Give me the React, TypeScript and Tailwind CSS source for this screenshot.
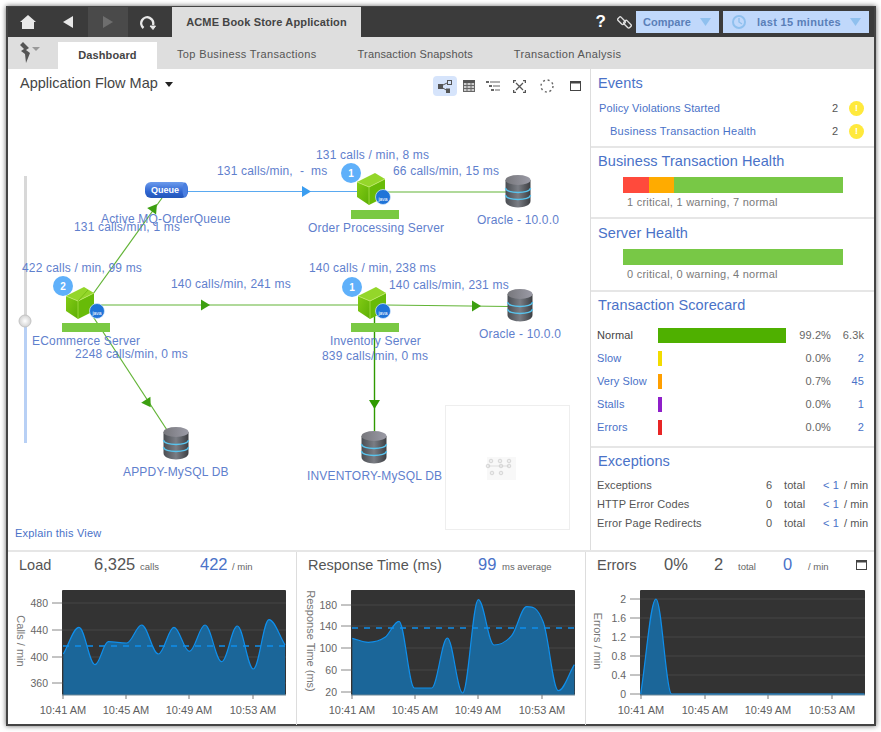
import type { ReactNode } from 'react'

type Pt = [number, number]

// monotone curve: flat at local peaks and dips, sloped everywhere else
function curve(pts: Pt[]) {
  const n = pts.length
  const slope = pts.map(([x, y], i) => {
    if (i === 0) return (pts[1][1] - y) / (pts[1][0] - x)
    if (i === n - 1) return (y - pts[i - 1][1]) / (x - pts[i - 1][0])
    const a = y - pts[i - 1][1]
    const b = pts[i + 1][1] - y
    if (a * b <= 0) return 0
    return (pts[i + 1][1] - pts[i - 1][1]) / (pts[i + 1][0] - pts[i - 1][0])
  })
  let d = `M${pts[0][0]} ${pts[0][1]}`
  for (let i = 1; i < n; i++) {
    const [x0, y0] = pts[i - 1]
    const [x1, y1] = pts[i]
    const h = (x1 - x0) * 0.36
    d += ` C${x0 + h} ${y0 + slope[i - 1] * h} ${x1 - h} ${y1 - slope[i] * h} ${x1} ${y1}`
  }
  return d
}

const fromZoom = (ox: number, list: Pt[]): Pt[] => list.map(([x, y]) => [ox + x / 3, 545 + y / 3])

const LOAD = fromZoom(0, [
  [190, 330], [237, 250], [285, 362], [325, 293], [380, 297], [425, 243], [475, 330], [522, 250],
  [568, 322], [615, 243], [665, 353], [712, 246], [760, 375], [807, 227], [855, 303],
])
const RESPONSE = fromZoom(295, [
  [172, 283], [220, 295], [270, 280], [312, 232], [358, 432], [410, 432], [457, 282], [503, 447],
  [550, 167], [597, 303], [650, 275], [695, 188], [745, 235], [790, 440], [838, 362],
])
const ERRORS = fromZoom(585, [[167, 450], [213, 165], [260, 450], [838, 450]])

type ChartProps = {
  left: number
  width: number
  plot: [number, number]
  yTicks: [string, number][]
  xTicks: number[]
  pts: Pt[]
  dash?: number
  axis: string
  axisX: number
}

function Chart({ left, width, plot, yTicks, xTicks, pts, dash, axis, axisX }: ChartProps) {
  const [x0, x1] = plot
  const first = pts[0]
  const last = pts[pts.length - 1]
  const line = curve(pts)
  return (
    <svg width={width} height={140} viewBox={`${left} 585 ${width} 140`} className="block">
      <rect x={x0} y={591} width={x1 - x0} height={105} rx={1} fill="#333333" />
      {yTicks.map(([label, y]) => (
        <g key={label}>
          <line x1={x0} x2={x1} y1={y} y2={y} stroke="#474747" />
          <line x1={x0 - 10} x2={x0} y1={y} y2={y} stroke="#888888" />
          <text x={x0 - 14} y={y} textAnchor="end" dominantBaseline="central" className="fill-[#666666] text-[10.5px]">
            {label}
          </text>
        </g>
      ))}
      <path d={`${line} L${last[0]} 696 L${first[0]} 696 Z`} fill="#1b6699" />
      <path d={line} fill="none" stroke="#0f8fec" strokeWidth={1.2} />
      {dash && <line x1={x0 + 1} x2={x1} y1={dash} y2={dash} stroke="#0f8fec" strokeWidth={1.5} strokeDasharray="6 6" />}
      <line x1={x0} x2={x1} y1={696} y2={696} stroke="#6f8796" />
      {xTicks.map((x, i) => (
        <g key={x}>
          <line x1={x} x2={x} y1={696} y2={700} stroke="#777777" />
          <text x={x} y={711} textAnchor="middle" dominantBaseline="central" className="fill-[#5f5f5f] text-[11px]">
            {['10:41 AM', '10:45 AM', '10:49 AM', '10:53 AM'][i]}
          </text>
        </g>
      ))}
      <text
        x={axisX}
        y={642}
        textAnchor="middle"
        dominantBaseline="central"
        transform={`rotate(90 ${axisX} 642)`}
        className="fill-[#777777] text-[11px]"
      >
        {axis}
      </text>
    </svg>
  )
}

function MapText({ x, y, children }: { x: number; y: number; children: ReactNode }) {
  return (
    <text x={x} y={y} dominantBaseline="central" className="fill-[#5f80cd] text-[12px] tracking-[0.18px]">
      {children}
    </text>
  )
}

function Arrow({ x, y, angle, color }: { x: number; y: number; angle: number; color: string }) {
  return <polygon points="-4,-5.5 5,0 -4,5.5" fill={color} transform={`translate(${x} ${y}) rotate(${angle})`} />
}

function Database({ x, y }: { x: number; y: number }) {
  return (
    <g transform={`translate(${x} ${y})`}>
      <path d="M-12.5 4 V25 C-12.5 33.5 12.5 33.5 12.5 25 V4 Z" fill="url(#dbSide)" />
      <ellipse cx={0} cy={4} rx={12.5} ry={5} fill="url(#dbTop)" />
      <path d="M-12.5 12 C-12.5 18 12.5 18 12.5 12" fill="none" stroke="#58c4ee" strokeWidth={1.4} />
      <path d="M-12.5 19 C-12.5 25 12.5 25 12.5 19" fill="none" stroke="#58c4ee" strokeWidth={1.4} />
    </g>
  )
}

function Cube({ x, y, split }: { x: number; y: number; split?: boolean }) {
  return (
    <g transform={`translate(${x} ${y})`}>
      <polygon points="-14,-8 -2,-3 -2,15 -14,7" fill="url(#cubeLeft)" />
      <polygon points="-2,-3 14,-11 14,7 -2,15" fill="#68bb08" />
      <polygon points="-14,-8 4,-17 14,-11 -2,-3" fill="#94d62a" />
      <polyline points="-14,-8 -2,-3 14,-11" fill="none" stroke="#bfe86a" strokeWidth={0.8} />
      <line x1={-2} y1={-3} x2={-2} y2={15} stroke="#a6de4a" strokeWidth={0.8} />
      {split && <line x1={-2} y1={-3} x2={8} y2={-14} stroke="#6cb810" strokeWidth={0.8} />}
    </g>
  )
}

function JavaBadge({ x, y }: { x: number; y: number }) {
  return (
    <g>
      <circle cx={x} cy={y} r={7.5} fill="#1f74d8" stroke="#dcecff" strokeWidth={0.7} />
      <text x={x} y={y + 2} textAnchor="middle" dominantBaseline="central" className="fill-white text-[5px]">
        java
      </text>
    </g>
  )
}

function Bubble({ x, y, n }: { x: number; y: number; n: number }) {
  return (
    <g>
      <circle cx={x} cy={y} r={10} fill="#5fb0fa" />
      <text x={x} y={y} textAnchor="middle" dominantBaseline="central" className="fill-white text-[10px] font-bold">
        {n}
      </text>
    </g>
  )
}

function FlowMap() {
  const green = '#62b436'
  return (
    <svg width={582} height={447} viewBox="8 103 582 447" className="block">
      <defs>
        <linearGradient id="dbSide" x1="0" x2="1" y1="0" y2="0">
          <stop offset="0" stopColor="#4a4d52" />
          <stop offset="0.5" stopColor="#7a7d84" />
          <stop offset="1" stopColor="#3c3e42" />
        </linearGradient>
        <linearGradient id="dbTop" x1="0" x2="1" y1="0" y2="0">
          <stop offset="0" stopColor="#77777c" />
          <stop offset="1" stopColor="#9b9ba6" />
        </linearGradient>
        <linearGradient id="cubeLeft" x1="0" x2="1" y1="0" y2="1">
          <stop offset="0" stopColor="#84cc14" />
          <stop offset="1" stopColor="#5cae06" />
        </linearGradient>
        <linearGradient id="queue" x1="0" x2="0" y1="0" y2="1">
          <stop offset="0" stopColor="#6d9bec" />
          <stop offset="0.6" stopColor="#2f66d2" />
          <stop offset="1" stopColor="#2456b8" />
        </linearGradient>
        <radialGradient id="knob">
          <stop offset="0" stopColor="#ffffff" />
          <stop offset="1" stopColor="#d2d2d2" />
        </radialGradient>
      </defs>

      {/* zoom slider */}
      <rect x={24} y={176} width={3} height={145} fill="#d8d8d8" />
      <rect x={24} y={321} width={3} height={122} fill="#b8d0f5" />

      {/* edges */}
      <line x1={188} y1={191.5} x2={360} y2={191.5} stroke="#5aa9f0" strokeWidth={1.2} />
      <line x1={93} y1={294} x2={162} y2={198} stroke={green} strokeWidth={1.2} />
      <line x1={100} y1={305} x2={362} y2={305} stroke={green} strokeWidth={1.2} />
      <line x1={92} y1={315} x2={167} y2={430} stroke={green} strokeWidth={1.2} />
      <line x1={385} y1={192} x2={508} y2={192} stroke={green} strokeWidth={1.2} />
      <line x1={385} y1={305} x2={510} y2={306.5} stroke={green} strokeWidth={1.2} />
      <line x1={374.5} y1={315} x2={374.5} y2={434} stroke="#2f9a00" strokeWidth={1.4} />
      <Arrow x={306} y={191.5} angle={0} color="#3b9df0" />
      <Arrow x={154} y={208} angle={-54} color="#3c9f10" />
      <Arrow x={205} y={305} angle={0} color="#3c9f10" />
      <Arrow x={148} y={403} angle={57} color="#3c9f10" />
      <Arrow x={476} y={306} angle={0} color="#3c9f10" />
      <Arrow x={374.5} y={404} angle={90} color="#2f9a00" />

      {/* queue */}
      <rect x={145} y={182} width={43} height={16} rx={6} fill="url(#queue)" />
      <ellipse cx={185} cy={190} rx={2.5} ry={7.5} fill="#4a7fe0" />
      <text x={165} y={190} textAnchor="middle" dominantBaseline="central" className="fill-white text-[9px] font-bold">
        Queue
      </text>

      {/* nodes */}
      <Cube x={371} y={190} />
      <JavaBadge x={383} y={197} />
      <Bubble x={351} y={173} n={1} />
      <rect x={351} y={210} width={48} height={9} fill="#7ac943" />

      <Cube x={372} y={304} />
      <JavaBadge x={383} y={311} />
      <Bubble x={352} y={287} n={1} />
      <rect x={351} y={323} width={48} height={9} fill="#7ac943" />

      <Cube x={80} y={304} split />
      <JavaBadge x={97} y={311} />
      <Bubble x={63} y={286} n={2} />
      <rect x={62} y={323} width={48} height={9} fill="#7ac943" />

      <Database x={518} y={176} />
      <Database x={520} y={290} />
      <Database x={176} y={428} />
      <Database x={374} y={432} />

      {/* labels */}
      <MapText x={316} y={155}>131 calls / min, 8 ms</MapText>
      <MapText x={217} y={171}>131 calls/min,&#160; -&#160; ms</MapText>
      <MapText x={393} y={171}>66 calls/min, 15 ms</MapText>
      <MapText x={101} y={219}>Active MQ-OrderQueue</MapText>
      <MapText x={74} y={227}>131 calls/min, 1 ms</MapText>
      <MapText x={22} y={268}>422 calls / min, 99 ms</MapText>
      <MapText x={171} y={284}>140 calls/min, 241 ms</MapText>
      <MapText x={32} y={341}>ECommerce Server</MapText>
      <MapText x={75} y={354}>2248 calls/min, 0 ms</MapText>
      <MapText x={308} y={228}>Order Processing Server</MapText>
      <MapText x={477} y={220}>Oracle - 10.0.0</MapText>
      <MapText x={309} y={268}>140 calls / min, 238 ms</MapText>
      <MapText x={389} y={285}>140 calls/min, 231 ms</MapText>
      <MapText x={330} y={341}>Inventory Server</MapText>
      <MapText x={322} y={356}>839 calls/min, 0 ms</MapText>
      <MapText x={479} y={334}>Oracle - 10.0.0</MapText>
      <MapText x={123} y={472}>APPDY-MySQL DB</MapText>
      <MapText x={307} y={476}>INVENTORY-MySQL DB</MapText>

      <circle cx={25} cy={321} r={6} fill="url(#knob)" stroke="#c4c4c4" />

      {/* overview */}
      <rect x={445.5} y={405.5} width={124} height={124} fill="#ffffff" stroke="#eeeeee" />
      <rect x={487} y={457} width={29} height={23} fill="#f8f8f8" />
      <g fill="#eeeeee" stroke="#c4c4c4" strokeWidth={0.6}>
        <circle cx={491} cy={461} r={1.8} />
        <circle cx={500} cy={461} r={1.8} />
        <circle cx={509} cy={461} r={1.8} />
        <circle cx={488} cy={466} r={1.8} />
        <circle cx={501} cy={466} r={1.8} />
        <circle cx={509} cy={466} r={1.8} />
        <circle cx={492} cy={473} r={1.8} />
        <circle cx={501} cy={473} r={1.8} />
      </g>
      <line x1={488} y1={466} x2={509} y2={466} stroke="#c4c4c4" strokeWidth={0.5} />
    </svg>
  )
}

function Toolbar() {
  return (
    <div className="flex items-center h-[20px]">
      <span className="flex items-center justify-center w-[24px] h-[20px] rounded-sm bg-[#d6e4fb]">
        <svg width="14" height="13" viewBox="0 0 14 13" fill="#555555">
          <rect x="0" y="4" width="5" height="5" />
          <rect x="8" y="8.5" width="4" height="4.5" />
          <rect x="9.5" y="0.5" width="4" height="4" fill="none" stroke="#555555" />
          <path d="M4 5.5 L10 2.5 M4 7.5 L9 10.5" stroke="#555555" fill="none" />
        </svg>
      </span>
      <span className="flex justify-center w-[24px]">
        <svg width="12" height="12" viewBox="0 0 12 12" fill="none" stroke="#666666">
          <rect x="0.5" y="0.5" width="11" height="11" fill="#cccccc" />
          <rect x="0" y="0" width="12" height="3" fill="#555555" stroke="none" />
          <path d="M0 5.5 H12 M0 8.5 H12 M4 3 V12 M8 3 V12" />
        </svg>
      </span>
      <span className="flex justify-center w-[24px]">
        <svg width="14" height="11" viewBox="0 0 14 11" fill="#666666">
          <rect x="0" y="0" width="3" height="2" />
          <rect x="4" y="0.5" width="10" height="1" />
          <rect x="3" y="4" width="3" height="2" />
          <rect x="7" y="4.5" width="7" height="1" />
          <rect x="5" y="8" width="3" height="2" />
          <rect x="9" y="8.5" width="5" height="1" />
        </svg>
      </span>
      <span className="flex justify-center w-[28px]">
        <svg width="13" height="13" viewBox="0 0 13 13" fill="none" stroke="#555555" strokeWidth="1.3">
          <path d="M3 3 L10 10 M10 3 L3 10" />
          <path d="M0.6 3 V0.6 H3 M12.4 3 V0.6 H10 M0.6 10 V12.4 H3 M12.4 10 V12.4 H10" />
        </svg>
      </span>
      <span className="flex justify-center w-[28px]">
        <svg width="14" height="14" viewBox="0 0 14 14" fill="none" stroke="#666666" strokeWidth="1.4">
          <circle cx="7" cy="7" r="6" strokeDasharray="2 2.7" />
        </svg>
      </span>
      <span className="flex justify-center w-[28px]">
        <WindowIcon />
      </span>
    </div>
  )
}

function WindowIcon() {
  return (
    <svg width="11" height="10" viewBox="0 0 11 10" fill="none">
      <rect x="0.5" y="0.5" width="10" height="9" stroke="#444444" />
      <rect x="0" y="0" width="11" height="2.5" fill="#444444" />
    </svg>
  )
}

function SectionTitle({ children }: { children: ReactNode }) {
  return <h2 className="pl-[7px] text-[14.5px] leading-[18px] tracking-[0.1px] text-[#4a72c8]">{children}</h2>
}

function HealthBar({ children, caption }: { children: ReactNode; caption: string }) {
  return (
    <div className="pl-[32px]">
      <div className="flex w-[220px] h-[16px] mt-[7px]">{children}</div>
      <p className="pl-[4px] mt-[2px] text-[11px] leading-[14px] tracking-[0.25px] text-[#7a7a7a]">{caption}</p>
    </div>
  )
}

const SCORE = [
  { label: 'Normal', bar: 'bg-[#4fb000] w-[128px]', pct: '99.2%', count: '6.3k', link: false },
  { label: 'Slow', bar: 'bg-[#f2dc00] w-[4px]', pct: '0.0%', count: '2', link: true },
  { label: 'Very Slow', bar: 'bg-[#ff9f00] w-[4px]', pct: '0.7%', count: '45', link: true },
  { label: 'Stalls', bar: 'bg-[#8f1fc9] w-[4px]', pct: '0.0%', count: '1', link: true },
  { label: 'Errors', bar: 'bg-[#e82525] w-[4px]', pct: '0.0%', count: '2', link: true },
]

const EXCEPTIONS = [
  { label: 'Exceptions', n: '6' },
  { label: 'HTTP Error Codes', n: '0' },
  { label: 'Error Page Redirects', n: '0' },
]

function RightPanel() {
  return (
    <aside className="w-[285px] border-l border-[#dddddd] text-[11px] tracking-[0.1px]">
      <section className="h-[79px] pt-[5px] border-b-2 border-[#e6e6e6]">
        <SectionTitle>Events</SectionTitle>
        <div className="flex items-center h-[23px] mt-[5px] pl-[8px] pr-[10px]">
          <span className="flex-1 text-[#4a72c8]">Policy Violations Started</span>
          <span className="w-[14px] text-[#555555]">2</span>
          <WarnDot />
        </div>
        <div className="flex items-center h-[23px] pl-[19px] pr-[10px]">
          <span className="flex-1 tracking-[0.25px] text-[#4a72c8]">Business Transaction Health</span>
          <span className="w-[14px] text-[#555555]">2</span>
          <WarnDot />
        </div>
      </section>
      <section className="h-[71px] pt-[4px] border-b-2 border-[#e6e6e6]">
        <SectionTitle>Business Transaction Health</SectionTitle>
        <HealthBar caption="1 critical, 1 warning, 7 normal">
          <span className="w-[26px] bg-[#ff4a3c]" />
          <span className="w-[25px] bg-[#ffab00]" />
          <span className="flex-1 bg-[#78c846]" />
        </HealthBar>
      </section>
      <section className="h-[73px] pt-[5px] border-b-2 border-[#e6e6e6]">
        <SectionTitle>Server Health</SectionTitle>
        <HealthBar caption="0 critical, 0 warning, 4 normal">
          <span className="flex-1 bg-[#78c846]" />
        </HealthBar>
      </section>
      <section className="h-[156px] pt-[4px] border-b-2 border-[#e6e6e6]">
        <SectionTitle>Transaction Scorecard</SectionTitle>
        <div className="mt-[10px] pl-[6px]">
          {SCORE.map((r) => (
            <div key={r.label} className="flex items-center h-[23px]">
              <span className={`w-[61px] ${r.link ? 'text-[#4a72c8]' : 'text-[#444444]'}`}>{r.label}</span>
              <span className="w-[128px] flex">
                <span className={`h-[15px] ${r.bar}`} />
              </span>
              <span className="w-[45px] text-right text-[#666666]">{r.pct}</span>
              <span className={`w-[33px] text-right ${r.link ? 'text-[#4a72c8]' : 'text-[#666666]'}`}>{r.count}</span>
            </div>
          ))}
        </div>
      </section>
      <section className="pt-[4px]">
        <SectionTitle>Exceptions</SectionTitle>
        <div className="mt-[6px] pl-[6px]">
          {EXCEPTIONS.map((r) => (
            <div key={r.label} className="flex items-center h-[19px] text-[#555555]">
              <span className="w-[169px]">{r.label}</span>
              <span className="w-[18px]">{r.n}</span>
              <span className="w-[39px]">total</span>
              <span className="w-[21px] text-[#4a72c8]">&lt; 1</span>
              <span>/ min</span>
            </div>
          ))}
        </div>
      </section>
    </aside>
  )
}

function WarnDot() {
  return (
    <span className="flex items-center justify-center w-[15px] h-[15px] ml-[3px] rounded-full bg-[#ffe93c] text-[9px] font-bold text-white">
      !
    </span>
  )
}

function Stat({ className, children }: { className: string; children: ReactNode }) {
  return <span className={className}>{children}</span>
}

const big = 'text-[16.5px] text-[#555555]'
const bigBlue = 'text-[16.5px] text-[#4a72c8]'
const small = 'text-[9.5px] text-[#666666]'
const title = 'text-[14.5px] text-[#555555]'

function BottomPanels() {
  return (
    <div className="flex h-[175px] border-t-2 border-[#e6e6e6]">
      <div className="w-[289px] border-r border-[#dddddd]">
        <div className="flex items-baseline h-[32px] pl-[11px]">
          <Stat className={`${title} w-[75px]`}>Load</Stat>
          <Stat className={`${big} w-[46px]`}>6,325</Stat>
          <Stat className={`${small} w-[60px]`}>calls</Stat>
          <Stat className={`${bigBlue} w-[32px]`}>422</Stat>
          <Stat className={small}>/ min</Stat>
        </div>
        <Chart
          left={8}
          width={288}
          plot={[62, 286]}
          yTicks={[['480', 604], ['440', 631], ['400', 658], ['360', 684]]}
          xTicks={[63, 126, 189, 253]}
          pts={LOAD}
          dash={647}
          axis="Calls / min"
          axisX={21}
        />
      </div>
      <div className="w-[289px] border-r border-[#dddddd]">
        <div className="flex items-baseline h-[32px] pl-[11px]">
          <Stat className={`${title} w-[170px]`}>Response Time (ms)</Stat>
          <Stat className={`${bigBlue} w-[24px]`}>99</Stat>
          <Stat className={small}>ms average</Stat>
        </div>
        <Chart
          left={297}
          width={288}
          plot={[351, 575]}
          yTicks={[['180', 606], ['140', 627], ['100', 649], ['60', 671], ['20', 693]]}
          xTicks={[352, 415, 478, 542]}
          pts={RESPONSE}
          dash={629}
          axis="Response Time (ms)"
          axisX={311}
        />
      </div>
      <div className="flex-1">
        <div className="flex items-baseline h-[32px] pl-[11px] pr-[7px]">
          <Stat className={`${title} w-[67px]`}>Errors</Stat>
          <Stat className={`${big} w-[50px]`}>0%</Stat>
          <Stat className={`${big} w-[24px]`}>2</Stat>
          <Stat className={`${small} w-[45px]`}>total</Stat>
          <Stat className={`${bigBlue} w-[25px]`}>0</Stat>
          <Stat className={`${small} flex-1`}>/ min</Stat>
          <WindowIcon />
        </div>
        <Chart
          left={586}
          width={288}
          plot={[640, 865]}
          yTicks={[['2', 600], ['1.6', 619], ['1.2', 638], ['0.8', 657], ['0.4', 676], ['0', 695]]}
          xTicks={[641, 705, 768, 832]}
          pts={ERRORS}
          axis="Errors / min"
          axisX={598}
        />
      </div>
    </div>
  )
}

export default function App() {
  return (
    <div className="w-[881px] h-[732px] bg-white pt-[6px] pl-[6px] overflow-hidden font-['Liberation_Sans',sans-serif]">
      <div className="w-[870px] h-[720px] border-x-2 border-b-2 border-t border-[#444444] bg-white shadow-[0_0_5px_rgba(0,0,0,0.6)]">
        {/* top bar */}
        <header className="flex items-stretch h-[30px] bg-[#3b3b3b]">
          <button className="flex items-center justify-center w-[40px]">
            <svg width="16" height="14" viewBox="0 0 16 14" fill="#e8e8e8">
              <path d="M8 0 L16 7 H14 V14 H2 V7 H0 Z" />
            </svg>
          </button>
          <button className="flex items-center justify-center w-[40px]">
            <svg width="10" height="12" viewBox="0 0 10 12" fill="#e8e8e8">
              <path d="M10 0 V12 L0 6 Z" />
            </svg>
          </button>
          <button className="flex items-center justify-center w-[40px] bg-[#4a4a4a]">
            <svg width="10" height="12" viewBox="0 0 10 12" fill="#6e6e6e">
              <path d="M0 0 V12 L10 6 Z" />
            </svg>
          </button>
          <button className="flex items-center justify-center w-[40px]">
            <svg width="16" height="15" viewBox="0 0 16 15" fill="none" stroke="#e8e8e8" strokeWidth="2.4">
              <path d="M3.5 13 A6 6 0 1 1 13 10" />
              <path d="M10 11 L15.5 11 L13 14.5 Z" fill="#e8e8e8" strokeWidth="1" />
            </svg>
          </button>
          <div className="flex items-center justify-center w-[189px] ml-[4px] bg-[#dedede] text-[11px] font-bold tracking-[0.15px] text-[#444444]">
            ACME Book Store Application
          </div>
          <div className="flex-1 flex items-center justify-end pr-[5px]">
            <span className="mr-[11px] text-[17px] font-bold text-white">?</span>
            <svg className="mr-[4px]" width="15" height="15" viewBox="0 0 15 15" fill="none" stroke="#e0e0e0" strokeWidth="1.4">
              <rect x="0.5" y="3.5" width="8" height="4.5" rx="1.5" transform="rotate(45 4.5 5.7)" />
              <rect x="6.5" y="7" width="8" height="4.5" rx="1.5" transform="rotate(45 10.5 9.2)" />
            </svg>
            <button className="flex items-center justify-between w-[83px] h-[22px] pl-[7px] pr-[8px] bg-[#c0d8fb] text-[11px] font-bold tracking-[0.05px] text-[#5a7fb8]">
              Compare
              <Tri />
            </button>
            <button className="flex items-center w-[146px] h-[22px] ml-[4px] pl-[9px] pr-[8px] bg-[#c0d8fb] text-[11px] font-bold tracking-[0.3px] text-[#5a7fb8]">
              <svg width="14" height="14" viewBox="0 0 14 14" fill="none" stroke="#8fc0ee" strokeWidth="2">
                <circle cx="7" cy="7" r="6" />
                <path d="M7 3 V7 L10 9" strokeWidth="1.4" />
              </svg>
              <span className="flex-1 pl-[11px] text-left">last 15 minutes</span>
              <Tri />
            </button>
          </div>
        </header>

        {/* tabs */}
        <nav className="flex items-end h-[32px] bg-[#dedede] text-[11px] tracking-[0.35px] text-[#555555]">
          <div className="flex items-center self-stretch w-[50px] pl-[10px]">
            <svg width="22" height="22" viewBox="0 0 22 22" fill="#555555">
              <path d="M5 0 L11 6 L8 8 L12 11 L8 21 L7 12 L3 9 L6 7 L2 3 Z" />
              <path d="M14 5 H22 L18 9 Z" fill="#999999" />
            </svg>
          </div>
          <div className="flex items-center justify-center w-[99px] h-[27px] bg-white font-bold tracking-[0.1px] text-[#444444]">Dashboard</div>
          <span className="h-[27px] leading-[24px] ml-[20px]">Top Business Transactions</span>
          <span className="h-[27px] leading-[24px] ml-[41px] tracking-[0.15px]">Transaction Snapshots</span>
          <span className="h-[27px] leading-[24px] ml-[41px]">Transaction Analysis</span>
        </nav>

        <main className="flex h-[481px]">
          <div className="relative w-[582px]">
            <div className="flex items-center justify-between h-[34px] pl-[12px] pr-[1px]">
              <div className="flex items-center pb-[4px] text-[14.5px] text-[#444444]">
                Application Flow Map
                <svg className="ml-[7px]" width="8" height="5" viewBox="0 0 8 5" fill="#222222">
                  <path d="M0 0 H8 L4 5 Z" />
                </svg>
              </div>
              <Toolbar />
            </div>
            <FlowMap />
            <a className="absolute left-[7px] bottom-[9px] text-[11px] tracking-[0.2px] text-[#4a72c8]">Explain this View</a>
          </div>
          <RightPanel />
        </main>

        <BottomPanels />
      </div>
    </div>
  )
}

function Tri() {
  return (
    <svg width="11" height="8" viewBox="0 0 11 8" fill="#8fc0ee">
      <path d="M0 0 H11 L5.5 8 Z" />
    </svg>
  )
}
